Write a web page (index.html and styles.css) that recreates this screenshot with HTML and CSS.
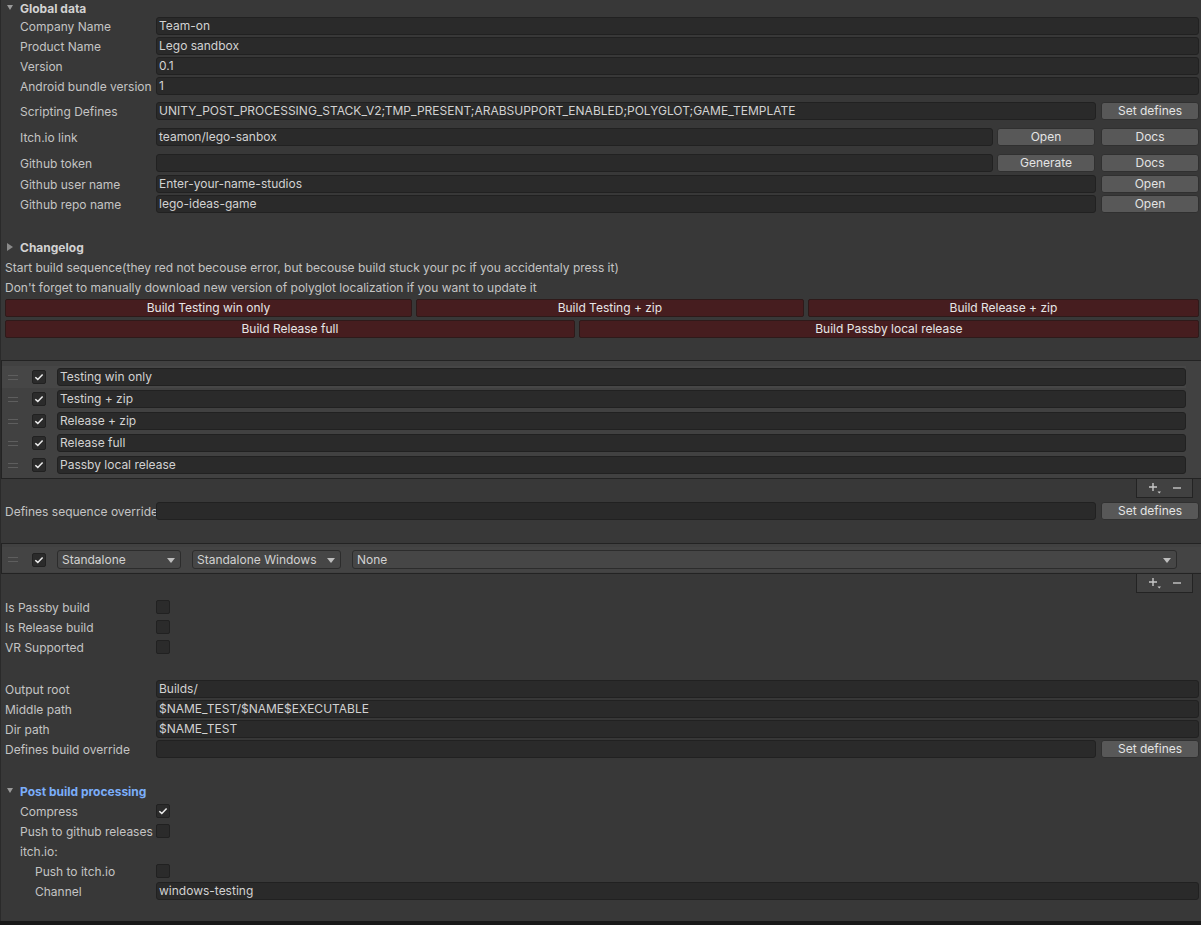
FILE: index.html
```html
<!DOCTYPE html>
<html lang="en">

<head>
    <meta charset="UTF-8" />
    <meta name="viewport" content="width=device-width, initial-scale=1.0" />
    <title>Build Settings</title>

    <link rel="stylesheet" href="styles.css">
</head>

<body>

    <div class="inspector">

        <!-- Global data -->
        <div class="foldout"><span class="arrow down"></span>Global data</div>
        <div class="row"><span class="label l1">Company Name</span><div class="field">Team-on</div></div>
        <div class="row"><span class="label l1">Product Name</span><div class="field">Lego sandbox</div></div>
        <div class="row"><span class="label l1">Version</span><div class="field">0.1</div></div>
        <div class="row"><span class="label l1">Android bundle version</span><div class="field">1</div></div>
        <div class="row gap-5"><span class="label l1">Scripting Defines</span><div class="field">UNITY_POST_PROCESSING_STACK_V2;TMP_PRESENT;ARABSUPPORT_ENABLED;POLYGLOT;GAME_TEMPLATE</div><button class="btn">Set defines</button></div>
        <div class="row gap-6"><span class="label l1">Itch.io link</span><div class="field">teamon/lego-sanbox</div><button class="btn first">Open</button><button class="btn second">Docs</button></div>
        <div class="row gap-6"><span class="label l1">Github token</span><div class="field"></div><button class="btn first">Generate</button><button class="btn second">Docs</button></div>
        <div class="row gap-1"><span class="label l1">Github user name</span><div class="field">Enter-your-name-studios</div><button class="btn">Open</button></div>
        <div class="row"><span class="label l1">Github repo name</span><div class="field">lego-ideas-game</div><button class="btn">Open</button></div>

        <!-- Changelog + build buttons -->
        <div class="foldout changelog"><span class="arrow right"></span>Changelog</div>
        <div class="note first-note">Start build sequence(they red not becouse error, but becouse build stuck your pc if you accidentaly press it)</div>
        <div class="note">Don't forget to manually download new version of polyglot localization if you want to update it</div>
        <div class="build-row first-build">
            <button class="build-btn">Build Testing win only</button>
            <button class="build-btn">Build Testing + zip</button>
            <button class="build-btn">Build Release + zip</button>
        </div>
        <div class="build-row second-build">
            <button class="build-btn">Build Release full</button>
            <button class="build-btn">Build Passby local release</button>
        </div>

        <!-- Build sequence list -->
        <div class="list sequence-list">
            <div class="list-item active">
                <span class="handle"></span>
                <span class="check on"><svg width="10" height="8" viewBox="0 0 10 8"><path d="M1.3 4.2 L3.8 6.4 L8.6 1.4" fill="none" stroke="#eeeeee" stroke-width="1.5"/></svg></span>
                <div class="field">Testing win only</div>
            </div>
            <div class="list-item">
                <span class="handle"></span>
                <span class="check on"><svg width="10" height="8" viewBox="0 0 10 8"><path d="M1.3 4.2 L3.8 6.4 L8.6 1.4" fill="none" stroke="#eeeeee" stroke-width="1.5"/></svg></span>
                <div class="field">Testing + zip</div>
            </div>
            <div class="list-item">
                <span class="handle"></span>
                <span class="check on"><svg width="10" height="8" viewBox="0 0 10 8"><path d="M1.3 4.2 L3.8 6.4 L8.6 1.4" fill="none" stroke="#eeeeee" stroke-width="1.5"/></svg></span>
                <div class="field">Release + zip</div>
            </div>
            <div class="list-item">
                <span class="handle"></span>
                <span class="check on"><svg width="10" height="8" viewBox="0 0 10 8"><path d="M1.3 4.2 L3.8 6.4 L8.6 1.4" fill="none" stroke="#eeeeee" stroke-width="1.5"/></svg></span>
                <div class="field">Release full</div>
            </div>
            <div class="list-item">
                <span class="handle"></span>
                <span class="check on"><svg width="10" height="8" viewBox="0 0 10 8"><path d="M1.3 4.2 L3.8 6.4 L8.6 1.4" fill="none" stroke="#eeeeee" stroke-width="1.5"/></svg></span>
                <div class="field">Passby local release</div>
            </div>
        </div>
        <div class="list-footer">
            <span class="add"><svg width="14" height="12" viewBox="0 0 14 12"><path d="M5 1 V9 M1 5 H9" stroke="#c8c8c8" stroke-width="1.4"/><path d="M9.5 9.5 H13 L11.25 11.5 Z" fill="#c8c8c8"/></svg></span>
            <span class="remove"><svg width="10" height="10" viewBox="0 0 10 10"><path d="M1 5 H9" stroke="#c8c8c8" stroke-width="1.4"/></svg></span>
        </div>

        <div class="row gap-3"><span class="label l0">Defines sequence override</span><div class="field"></div><button class="btn">Set defines</button></div>

        <!-- Target list -->
        <div class="list target-list">
            <div class="list-item target">
                <span class="handle"></span>
                <span class="check on"><svg width="10" height="8" viewBox="0 0 10 8"><path d="M1.3 4.2 L3.8 6.4 L8.6 1.4" fill="none" stroke="#eeeeee" stroke-width="1.5"/></svg></span>
                <div class="dropdown group">Standalone</div>
                <div class="dropdown platform">Standalone Windows</div>
                <div class="dropdown extra">None</div>
            </div>
        </div>
        <div class="list-footer">
            <span class="add"><svg width="14" height="12" viewBox="0 0 14 12"><path d="M5 1 V9 M1 5 H9" stroke="#c8c8c8" stroke-width="1.4"/><path d="M9.5 9.5 H13 L11.25 11.5 Z" fill="#c8c8c8"/></svg></span>
            <span class="remove"><svg width="10" height="10" viewBox="0 0 10 10"><path d="M1 5 H9" stroke="#c8c8c8" stroke-width="1.4"/></svg></span>
        </div>

        <!-- Build flags -->
        <div class="flags">
            <div class="row"><span class="label l0">Is Passby build</span><span class="check"></span></div>
            <div class="row"><span class="label l0">Is Release build</span><span class="check"></span></div>
            <div class="row"><span class="label l0">VR Supported</span><span class="check"></span></div>
        </div>

        <!-- Paths -->
        <div class="paths">
            <div class="row"><span class="label l0">Output root</span><div class="field">Builds/</div></div>
            <div class="row"><span class="label l0">Middle path</span><div class="field">$NAME_TEST/$NAME$EXECUTABLE</div></div>
            <div class="row"><span class="label l0">Dir path</span><div class="field">$NAME_TEST</div></div>
            <div class="row"><span class="label l0">Defines build override</span><div class="field"></div><button class="btn">Set defines</button></div>
        </div>

        <!-- Post build processing -->
        <div class="foldout post-build"><span class="arrow down"></span>Post build processing</div>
        <div class="post-rows">
            <div class="row"><span class="label l1">Compress</span><span class="check on"><svg width="10" height="8" viewBox="0 0 10 8"><path d="M1.3 4.2 L3.8 6.4 L8.6 1.4" fill="none" stroke="#eeeeee" stroke-width="1.5"/></svg></span></div>
            <div class="row"><span class="label l1">Push to github releases</span><span class="check"></span></div>
            <div class="row"><span class="label l1">itch.io:</span></div>
            <div class="row"><span class="label l2">Push to itch.io</span><span class="check"></span></div>
            <div class="row"><span class="label l2">Channel</span><div class="field">windows-testing</div></div>
        </div>

    </div>

</body>

</html>
```

FILE: styles.css
```css
* {
    box-sizing: border-box;
}

body {
    margin: 0;
    background-color: #191919;
    font-family: Inter, "Noto Sans", sans-serif;
    font-size: 12px;
    color: #c4c4c4;
}

.inspector {
    height: 921px;
    padding-right: 2px;
    background-color: #383838;
    border-left: 1px solid #2a2a2a;
    overflow: hidden;
}

/* foldout headers */
.foldout {
    height: 16px;
    display: flex;
    align-items: center;
    padding-left: 5px;
    font-weight: 700;
    color: #d2d2d2;
}

.arrow {
    width: 14px;
    display: inline-block;
    position: relative;
    height: 8px;
}

.arrow.down::before {
    content: "";
    position: absolute;
    left: 1px;
    top: 1px;
    border-left: 3.5px solid transparent;
    border-right: 3.5px solid transparent;
    border-top: 5px solid #9a9a9a;
}

.arrow.right::before {
    content: "";
    position: absolute;
    left: 1px;
    top: 0;
    border-top: 4px solid transparent;
    border-bottom: 4px solid transparent;
    border-left: 6px solid #8a8a8a;
}

.changelog {
    margin-top: 25px;
}

.post-build {
    margin-top: 24px;
    color: #7baefa;
}

/* property rows */
.row {
    height: 20px;
    display: flex;
    align-items: center;
}

.gap-1 { margin-top: 1px; }
.gap-3 { margin-top: 3px; }
.gap-5 { margin-top: 5px; }
.gap-6 { margin-top: 6px; }

.label {
    width: 155px;
    flex-shrink: 0;
    white-space: nowrap;
}

.l0 { padding-left: 4px; }
.l1 { padding-left: 19px; }
.l2 { padding-left: 34px; }

.field {
    flex: 1;
    height: 18px;
    padding: 0 2px;
    line-height: 16px;
    background-color: #2a2a2a;
    border: 1px solid #212121;
    border-radius: 3px;
    color: #d2d2d2;
    white-space: nowrap;
    overflow: hidden;
}

.btn {
    width: 98px;
    height: 18px;
    margin-left: 5px;
    padding: 0;
    background-color: #585858;
    border: 1px solid #303030;
    border-radius: 3px;
    font: inherit;
    color: #e4e4e4;
    line-height: 16px;
}

.btn.first { margin-left: 4px; }
.btn.second { margin-left: 6px; }

.check {
    width: 14px;
    height: 14px;
    flex-shrink: 0;
    display: flex;
    align-items: center;
    justify-content: center;
    background-color: #2b2b2b;
    border: 1px solid #212121;
    border-radius: 2px;
}

/* notes and red build buttons */
.note {
    height: 20px;
    line-height: 20px;
    padding-left: 4px;
    white-space: nowrap;
}

.first-note {
    margin-top: 3px;
}

.build-row {
    height: 18px;
    display: flex;
    gap: 4px;
    padding-left: 4px;
}

.first-build { margin-top: 1px; }
.second-build { margin-top: 3px; }

.build-btn {
    flex: 1 1 auto;
    height: 18px;
    padding: 0 6px;
    background-color: #461d1f;
    border: 1px solid #2e1a1a;
    border-radius: 2px;
    font: inherit;
    color: #e6e6e6;
    line-height: 16px;
    white-space: nowrap;
}

/* reorderable lists */
.list {
    margin-right: -2px;
    background-color: #414141;
    border: 1px solid #232323;
    border-right: none;
}

.sequence-list {
    margin-top: 22px;
    padding: 5px 15px 2px 0;
}

.target-list {
    margin-top: 22px;
    padding: 3px 0 1px 0;
}

.list-item {
    height: 22px;
    display: flex;
    align-items: center;
    padding-left: 6px;
}

.list-item.active {
    background-color: #464646;
}

.list-item.target {
    height: 25px;
    padding-right: 24px;
    background-color: #444444;
}

.handle {
    width: 10px;
    height: 5px;
    flex-shrink: 0;
    border-top: 1px solid #5e5e5e;
    border-bottom: 1px solid #5e5e5e;
}

.list-item .check {
    margin-left: 14px;
}

.list-item .field {
    margin-left: 11px;
}

.dropdown {
    height: 19px;
    margin-left: 11px;
    padding: 0 16px 0 4px;
    position: relative;
    line-height: 17px;
    background-color: #464646;
    border: 1px solid #2c2c2c;
    border-radius: 3px;
    color: #d2d2d2;
    white-space: nowrap;
}

.dropdown::after {
    content: "";
    position: absolute;
    right: 5px;
    top: 7px;
    border-left: 4px solid transparent;
    border-right: 4px solid transparent;
    border-top: 5px solid #bdbdbd;
}

.dropdown.group { width: 124px; }
.dropdown.platform { width: 149px; margin-left: 11px; }
.dropdown.extra { flex: 1; }

.list-footer {
    width: 57px;
    height: 19px;
    margin-left: auto;
    margin-right: 6px;
    display: flex;
    align-items: center;
    justify-content: space-between;
    padding: 0 10px 0 11px;
    background-color: #414141;
    border: 1px solid #232323;
    border-top: none;
}

.list-footer svg {
    display: block;
}

/* lower groups */
.flags {
    margin-top: 4px;
}

.paths {
    margin-top: 22px;
}

.post-rows {
    margin-top: 2px;
}
```
